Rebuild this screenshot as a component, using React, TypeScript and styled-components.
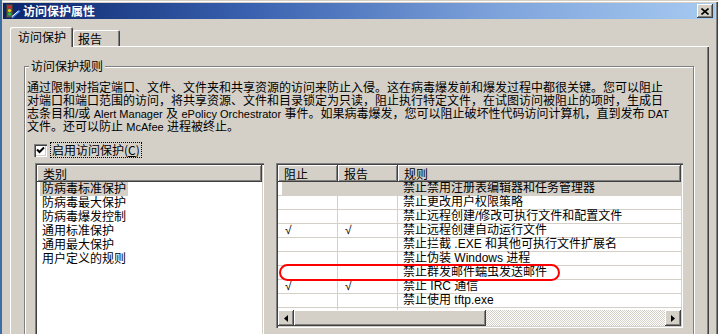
import React from 'react';
import styled, { createGlobalStyle } from 'styled-components';

const GlobalStyle = createGlobalStyle`
  html, body {
    margin: 0;
    padding: 0;
    background: #d4d0c8;
  }
  body {
    font-family: "Liberation Sans", "Noto Sans CJK SC", sans-serif;
    font-size: 12px;
    color: #000;
  }
  * {
    box-sizing: border-box;
  }
`;

const raised = `
  box-shadow: inset -1px -1px #404040, inset 1px 1px #fff, inset -2px -2px #808080;
`;

const categories = ['防病毒标准保护', '防病毒最大保护', '防病毒爆发控制', '通用标准保护', '通用最大保护', '用户定义的规则'];

const rules = [
  { block: false, report: false, name: '禁止禁用注册表编辑器和任务管理器' },
  { block: false, report: false, name: '禁止更改用户权限策略' },
  { block: false, report: false, name: '禁止远程创建/修改可执行文件和配置文件' },
  { block: true, report: true, name: '禁止远程创建自动运行文件' },
  { block: false, report: false, name: '禁止拦截 .EXE 和其他可执行文件扩展名' },
  { block: false, report: false, name: '禁止伪装 Windows 进程' },
  { block: false, report: false, name: '禁止群发邮件蠕虫发送邮件' },
  { block: true, report: true, name: '禁止 IRC 通信' },
  { block: false, report: false, name: '禁止使用 tftp.exe' },
  { block: false, report: false, name: '' },
];

const App = () => {
  return (
    <>
      <GlobalStyle />
      <Window>
        <TitleBar>
          <AppIcon />
          <Title>访问保护属性</Title>
          <CloseButton>
            <svg width="8" height="7" viewBox="0 0 8 7">
              <path d="M0.5 0.5 L7.5 6.5 M7.5 0.5 L0.5 6.5" stroke="#000" strokeWidth="1.6" />
            </svg>
          </CloseButton>
        </TitleBar>

        <TabStrip>
          <Tab $active>访问保护</Tab>
          <Tab>报告</Tab>
        </TabStrip>

        <TabPage>
          <GroupBox>
            <Legend>访问保护规则</Legend>
            <Description>
              <Line>通过限制对指定端口、文件、文件夹和共享资源的访问来防止入侵。这在病毒爆发前和爆发过程中都很关键。您可以阻止</Line>
              <Line>对端口和端口范围的访问，将共享资源、文件和目录锁定为只读，阻止执行特定文件，在试图访问被阻止的项时，生成日</Line>
              <Line>
                志条目和/或 <Latin>Alert Manager</Latin> 及 <Latin>ePolicy Orchestrator</Latin>{' '}
                事件。如果病毒爆发，您可以阻止破坏性代码访问计算机，直到发布 <Latin>DAT</Latin>
              </Line>
              <Line>
                文件。还可以防止 <Latin>McAfee</Latin> 进程被终止。
              </Line>
            </Description>

            <CheckRow>
              <CheckBox>
                <svg width="9" height="9" viewBox="0 0 9 9">
                  <path d="M1 3.5 L3.5 6 L8 1.5" stroke="#000" strokeWidth="2" fill="none" />
                </svg>
              </CheckBox>
              <CheckLabel>
                启用访问保护(<u>C</u>)
              </CheckLabel>
            </CheckRow>

            <Lists>
              <ListBox $width={229} $height={175}>
                <HeaderRow>
                  <HeaderCell $grow>类别</HeaderCell>
                </HeaderRow>
                {categories.map((name, idx) => (
                  <CategoryItem key={name}>
                    <CategoryText $selected={idx === 0}>{name}</CategoryText>
                  </CategoryItem>
                ))}
              </ListBox>

              <RuleWrap>
                <ListBox $width={407} $height={165}>
                  <HeaderRow>
                    <HeaderCell $width={60}>阻止</HeaderCell>
                    <HeaderCell $width={60}>报告</HeaderCell>
                    <HeaderCell $grow>规则</HeaderCell>
                  </HeaderRow>
                  <RuleBody>
                    {rules.map((rule, idx) => (
                      <RuleRow key={idx} $selected={idx === 0}>
                        <Cell $width={60}>{rule.block ? '√' : ''}</Cell>
                        <Cell $width={60}>{rule.report ? '√' : ''}</Cell>
                        <Cell $grow>{rule.name}</Cell>
                      </RuleRow>
                    ))}
                  </RuleBody>
                  <ScrollBar>
                    <ArrowButton>
                      <svg width="4" height="7" viewBox="0 0 4 7">
                        <path d="M4 0 L0 3.5 L4 7 Z" fill="#000" />
                      </svg>
                    </ArrowButton>
                    <Thumb />
                    <Track />
                    <ArrowButton>
                      <svg width="4" height="7" viewBox="0 0 4 7">
                        <path d="M0 0 L4 3.5 L0 7 Z" fill="#000" />
                      </svg>
                    </ArrowButton>
                  </ScrollBar>
                </ListBox>
                <Highlight />
              </RuleWrap>
            </Lists>
          </GroupBox>
        </TabPage>
      </Window>
    </>
  );
};

const AppIcon = () => (
  <svg width="16" height="16" viewBox="0 0 16 16">
    <rect x="1" y="1" width="7" height="14" fill="#3a3a3a" />
    <rect x="2" y="2" width="5" height="12" fill="#5a5a5a" />
    <circle cx="4.5" cy="4" r="1.6" fill="#e02020" />
    <circle cx="4.5" cy="7.5" r="1.6" fill="#f0d000" />
    <circle cx="4.5" cy="11" r="1.6" fill="#20c040" />
    <path d="M6 14 L14 7 L15.5 8.5 L7.5 15.5 Z" fill="#3c7ce0" />
    <path d="M7 13.5 L13.5 8" stroke="#ffffff" strokeWidth="1" />
  </svg>
);

const Window = styled.div`
  width: 718px;
  height: 334px;
  overflow: hidden;
  display: flex;
  flex-direction: column;
  background: #d4d0c8;
  border-left: 2px solid #3a6ea5;
  padding: 3px 3px 0 1px;
  box-shadow: inset 0 1px #d4d0c8, inset 0 2px #fff, inset -1px 0 #404040, inset -2px 0 #808080;
`;

const TitleBar = styled.div`
  display: flex;
  align-items: center;
  gap: 2px;
  height: 18px;
  padding: 0 2px;
  background: linear-gradient(to right, #0a246a 0%, #3a62b0 35%, #7fa4dc 70%, #a6caf0 100%);
`;

const Title = styled.span`
  color: #fff;
  font-family: "Noto Sans CJK SC", sans-serif;
  font-weight: 700;
  font-size: 12px;
  line-height: 14px;
`;

const CloseButton = styled.div`
  margin-left: auto;
  width: 16px;
  height: 14px;
  display: flex;
  align-items: center;
  justify-content: center;
  background: #d4d0c8;
  ${raised}
`;

const TabStrip = styled.div`
  display: flex;
  align-items: flex-end;
  margin-top: 8px;
  padding-left: 7px;
  position: relative;
  z-index: 1;
`;

const Tab = styled.div<{ $active?: boolean }>`
  height: ${p => (p.$active ? 20 : 16)}px;
  width: ${p => (p.$active ? 63 : 47)}px;
  padding: ${p => (p.$active ? '3px 0 0 8px' : '2px 0 0 5px')};
  margin-bottom: ${p => (p.$active ? -1 : 0)}px;
  line-height: 13px;
  font-family: "Noto Sans CJK SC", sans-serif;
  background: #d4d0c8;
  border-radius: 2px 2px 0 0;
  box-shadow: inset 1px 1px #fff, inset -1px 0 #404040, inset -2px 0 #808080;
`;

const TabPage = styled.div`
  flex: 1;
  margin: 0 6px 0 7px;
  padding: 14px 0 0 14px;
  box-shadow: inset 1px 1px #fff, inset -1px 0 #404040, inset -2px 0 #808080;
`;

const GroupBox = styled.fieldset`
  width: 670px;
  height: 300px;
  margin: 0;
  padding: 0 0 0 2px;
  min-width: 0;
  border: 1px solid #808080;
  box-shadow: inset 1px 1px #fff, 1px 1px #fff;
`;

const Legend = styled.legend`
  margin-left: 2px;
  padding: 0 2px;
  line-height: 12px;
  background: #d4d0c8;
  font-family: "Noto Sans CJK SC", sans-serif;
`;

const Description = styled.div`
  margin-top: 10px;
`;

const Line = styled.div`
  white-space: nowrap;
  line-height: 13px;
  height: 13px;
`;

const Latin = styled.span`
  font-size: 11px;
`;

const CheckRow = styled.div`
  display: flex;
  align-items: center;
  height: 16px;
  margin: 8px 0 0 7px;
  gap: 4px;
`;

const CheckBox = styled.div`
  width: 13px;
  height: 13px;
  display: flex;
  align-items: center;
  justify-content: center;
  background: #fff;
  box-shadow: inset 1px 1px #808080, inset 2px 2px #404040, inset -1px -1px #fff, inset -2px -2px #d4d0c8;
`;

const CheckLabel = styled.span`
  padding: 0 1px;
  line-height: 14px;
  outline: 1px dotted #000;
  font-family: "Noto Sans CJK SC", sans-serif;
`;

const Lists = styled.div`
  display: flex;
  gap: 12px;
  margin: 5px 0 0 8px;
  align-items: flex-start;
`;

const ListBox = styled.div<{ $width: number; $height: number }>`
  width: ${p => p.$width}px;
  height: ${p => p.$height}px;
  padding: 2px;
  background: #fff;
  display: flex;
  flex-direction: column;
  overflow: hidden;
  box-shadow: inset 1px 1px #808080, inset 2px 2px #404040, inset -1px -1px #fff, inset -2px -2px #d4d0c8;
`;

const HeaderRow = styled.div`
  display: flex;
  height: 17px;
  flex-shrink: 0;
`;

const HeaderCell = styled.div<{ $width?: number; $grow?: boolean }>`
  width: ${p => (p.$width ? `${p.$width}px` : 'auto')};
  flex: ${p => (p.$grow ? 1 : 'none')};
  padding: 2px 0 0 6px;
  line-height: 13px;
  background: #d4d0c8;
  font-family: "Noto Sans CJK SC", sans-serif;
  ${raised}
`;

const CategoryItem = styled.div`
  height: 14px;
  padding-left: 3px;
  line-height: 14px;
`;

const CategoryText = styled.span<{ $selected?: boolean }>`
  display: inline-block;
  padding: 0 2px;
  height: 14px;
  background: ${p => (p.$selected ? '#d4d0c8' : 'transparent')};
`;

const RuleWrap = styled.div`
  position: relative;
`;

const RuleBody = styled.div`
  height: 128px;
  overflow: hidden;
`;

const RuleRow = styled.div<{ $selected?: boolean }>`
  display: flex;
  height: 14px;
  line-height: 13px;
  border-bottom: 1px solid #d4d0c8;
  background: ${p => (p.$selected ? 'linear-gradient(to right, #fff 4px, #d4d0c8 4px)' : '#fff')};
`;

const Cell = styled.div<{ $width?: number; $grow?: boolean }>`
  width: ${p => (p.$width ? `${p.$width}px` : 'auto')};
  flex: ${p => (p.$grow ? 1 : 'none')};
  padding-left: ${p => (p.$grow ? 5 : 7)}px;
  white-space: nowrap;
  border-right: ${p => (p.$grow ? 'none' : '1px solid #d4d0c8')};
`;

const ScrollBar = styled.div`
  display: flex;
  height: 16px;
  flex-shrink: 0;
`;

const ArrowButton = styled.div`
  width: 16px;
  height: 16px;
  display: flex;
  align-items: center;
  justify-content: center;
  background: #d4d0c8;
  ${raised}
`;

const Thumb = styled.div`
  width: 192px;
  background: #d4d0c8;
  ${raised}
`;

const Track = styled.div`
  flex: 1;
  background: repeating-conic-gradient(#fff 0 25%, #d4d0c8 0 50%) 0 0 / 2px 2px;
`;

const Highlight = styled.div`
  position: absolute;
  left: 3px;
  top: 101px;
  width: 281px;
  height: 17px;
  border: 2px solid #f00;
  border-radius: 9px;
  pointer-events: none;
`;

export default App;
